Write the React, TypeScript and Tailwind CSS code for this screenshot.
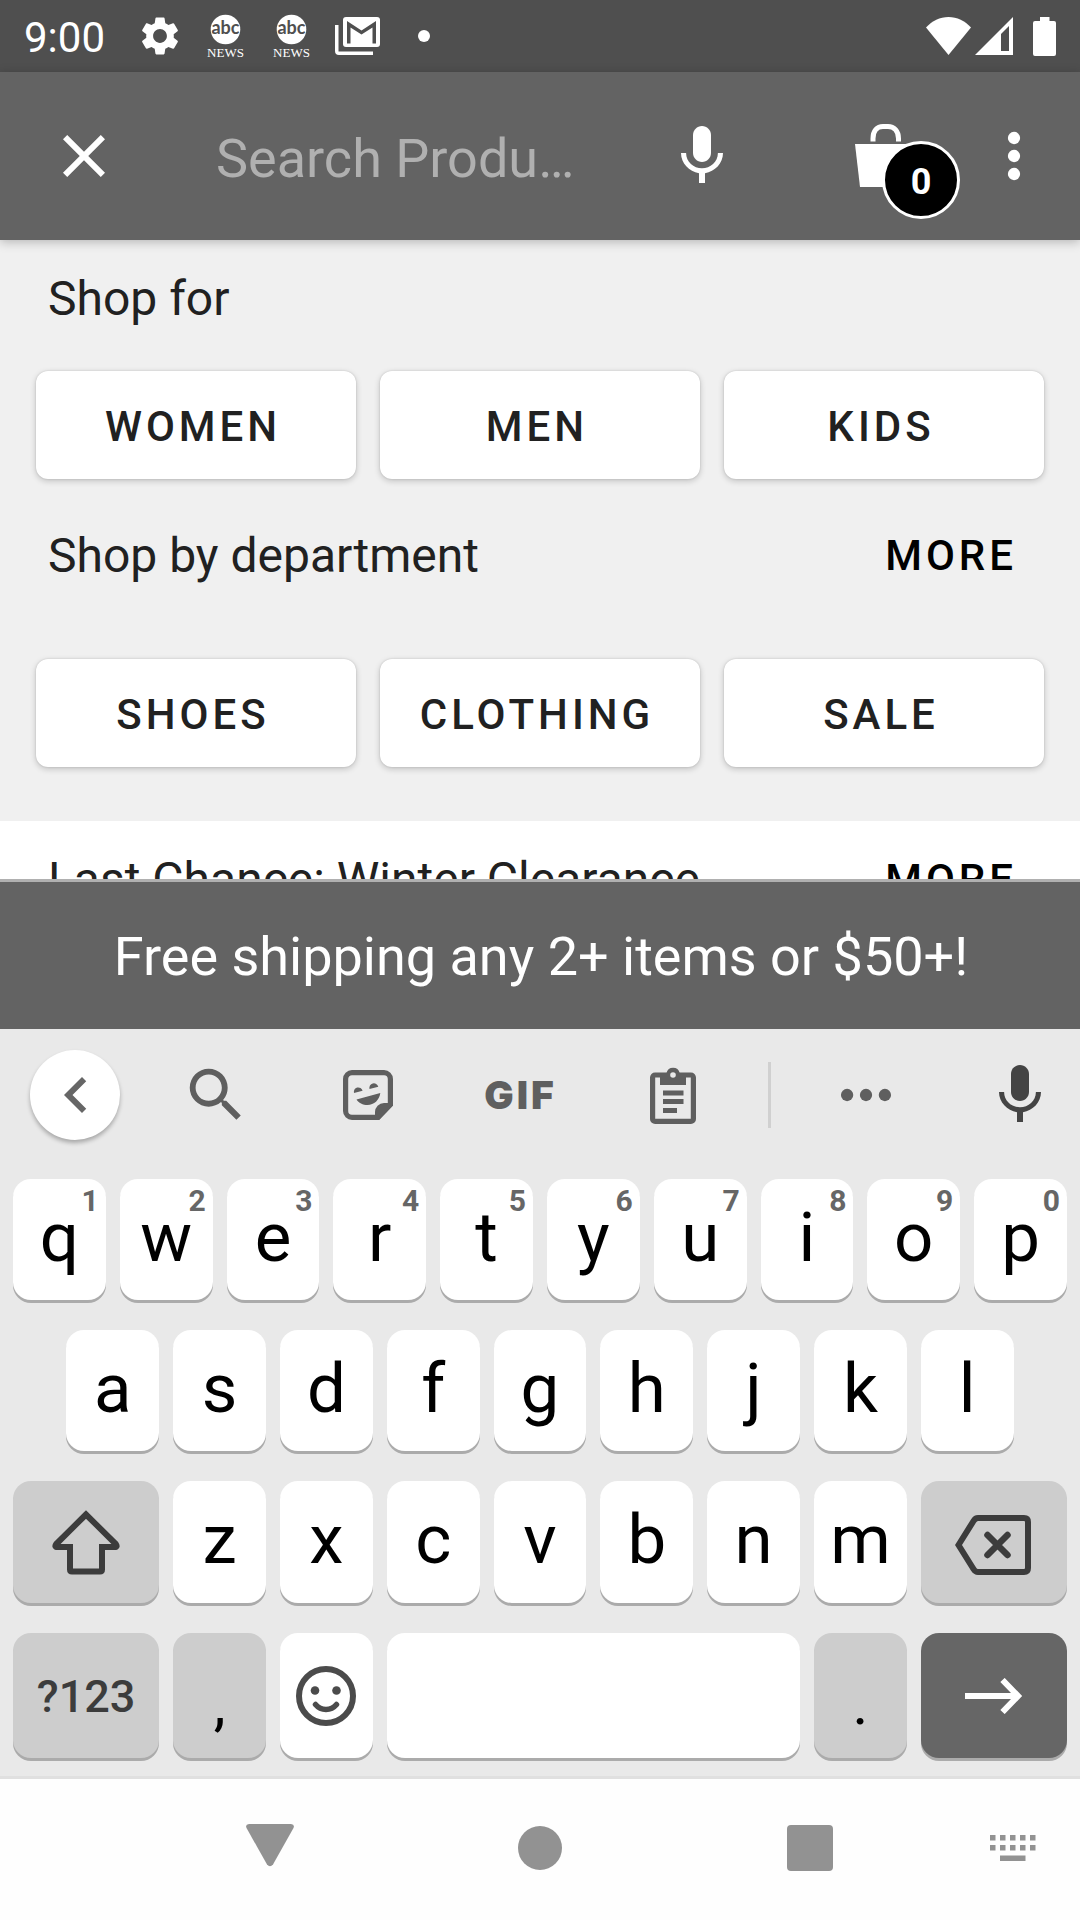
import React from "react";

/* ---------- Icons ---------- */

const GearIcon = () => (
  <svg className="size-[46px]" viewBox="0 0 24 24" fill="currentColor" aria-hidden="true">
    <path d="M19.14 12.94c.04-.3.06-.61.06-.94 0-.32-.02-.64-.07-.94l2.03-1.58a.49.49 0 0 0 .12-.61l-1.92-3.32a.488.488 0 0 0-.59-.22l-2.39.96c-.5-.38-1.03-.7-1.62-.94l-.36-2.54a.484.484 0 0 0-.48-.41h-3.84c-.24 0-.43.17-.47.41l-.36 2.54c-.59.24-1.13.57-1.62.94l-2.39-.96c-.22-.08-.47 0-.59.22L2.74 8.87c-.12.21-.08.47.12.61l2.03 1.58c-.05.3-.09.63-.09.94s.02.64.07.94l-2.03 1.58a.49.49 0 0 0-.12.61l1.92 3.32c.12.22.37.29.59.22l2.39-.96c.5.38 1.03.7 1.62.94l.36 2.54c.05.24.24.41.48.41h3.84c.24 0 .44-.17.47-.41l.36-2.54c.59-.24 1.13-.56 1.62-.94l2.39.96c.22.08.47 0 .59-.22l1.92-3.32c.12-.22.07-.47-.12-.61l-2.01-1.58zM12 15.6c-1.98 0-3.6-1.62-3.6-3.6s1.62-3.6 3.6-3.6 3.6 1.62 3.6 3.6-1.62 3.6-3.6 3.6z" />
  </svg>
);

const AbcNewsIcon = () => (
  <svg className="h-[54px] w-[40px]" viewBox="-1 -5 40 54" role="img" aria-label="abc NEWS">
    <circle cx="18.500" cy="15.500" r="14.800" fill="#fff" />
    <text x="18.500" y="20" textAnchor="middle" fontFamily="Lato, sans-serif" fontWeight="700" fontSize="18" fill="#4f4f4f">abc</text>
    <text x="18.500" y="43" textAnchor="middle" fontFamily="'Liberation Serif', serif" fontSize="13" fill="#fff">NEWS</text>
  </svg>
);

const GmailIcon = () => (
  <svg className="h-[38px] w-[45px]" viewBox="0 0 45 38" aria-hidden="true">
    <path d="M0 8h3.500v26.500H38V38H4a4 4 0 0 1-4-4z" fill="#fff" />
    <rect x="8" width="37" height="30" rx="3" fill="#fff" />
    <path d="M12 4l14.500 9.500L41 4v22.500h-3.500V10.500L26.500 17.500l-11-7v16H12z" fill="#4f4f4f" />
  </svg>
);

const WifiIcon = () => (
  <svg className="h-[38px] w-[45px]" viewBox="0 0 45 38" fill="currentColor" aria-hidden="true">
    <path d="M22.500 38L0 10.500C6 4 14 0 22.500 0S39 4 45 10.500z" />
  </svg>
);

const CellIcon = () => (
  <svg className="size-[38px]" viewBox="0 0 38 38" fill="currentColor" fillRule="evenodd" aria-hidden="true">
    <path d="M38 0v38H0zM34 9l-8 8v17h8z" />
  </svg>
);

const BatteryIcon = () => (
  <svg className="h-[39px] w-[23px]" viewBox="0 0 23 39" fill="currentColor" aria-hidden="true">
    <path d="M7 0h9.500v4H21a2 2 0 0 1 2 2v31a2 2 0 0 1-2 2H2a2 2 0 0 1-2-2V6a2 2 0 0 1 2-2h5z" />
  </svg>
);

const CloseIcon = () => (
  <svg className="size-[72px]" viewBox="0 0 24 24" fill="currentColor" aria-hidden="true">
    <path d="M19 6.410L17.590 5 12 10.590 6.410 5 5 6.410 10.590 12 5 17.590 6.410 19 12 13.410 17.590 19 19 17.590 13.410 12z" />
  </svg>
);

const MicIcon = () => (
  <svg className="size-[72px]" viewBox="0 0 24 24" fill="currentColor" aria-hidden="true">
    <path d="M12 14c1.660 0 3-1.340 3-3V5c0-1.660-1.340-3-3-3S9 3.340 9 5v6c0 1.660 1.340 3 3 3z" />
    <path d="M17.300 11c0 3-2.540 5.100-5.300 5.100S6.700 14 6.700 11H5c0 3.410 2.720 6.230 6 6.720V21h2v-3.280c3.280-.48 6-3.300 6-6.720h-1.700z" />
  </svg>
);

const BagIcon = () => (
  <svg className="h-[64px] w-[62px]" viewBox="0 0 62 64" aria-hidden="true">
    <path d="M0 21h62l-5 43H5z" fill="#fff" />
    <path d="M18 18.500v-3C18 8 22 3.500 28 3.500h5C39 3.500 43.500 8 43.500 15.500v3" fill="none" stroke="#fff" strokeWidth="5" />
  </svg>
);

const DotsIcon = ({ vertical }: { vertical?: boolean }) => (
  <svg className="size-[72px]" viewBox="0 0 24 24" fill="currentColor" aria-hidden="true">
    <circle cx={vertical ? 12 : 5.7} cy={vertical ? 6 : 12} r="2.050" />
    <circle cx="12" cy="12" r="2.050" />
    <circle cx={vertical ? 12 : 18.3} cy={vertical ? 18 : 12} r="2.050" />
  </svg>
);

const ChevronLeftIcon = () => (
  <svg className="size-[72px]" viewBox="0 0 24 24" fill="currentColor" aria-hidden="true">
    <path d="M15.410 7.410L14 6l-6 6 6 6 1.410-1.410L10.830 12z" />
  </svg>
);

const SearchIcon = () => (
  <svg className="size-[70px]" viewBox="0 0 24 24" fill="currentColor" aria-hidden="true">
    <path d="M15.500 14h-.79l-.28-.27A6.471 6.471 0 0 0 16 9.500 6.500 6.500 0 1 0 9.500 16c1.610 0 3.090-.59 4.230-1.570l.27.28v.79l5 4.990L20.490 19l-4.990-5zm-6 0C7.010 14 5 11.990 5 9.500S7.010 5 9.500 5 14 7.010 14 9.500 11.990 14 9.500 14z" />
  </svg>
);

const StickerIcon = () => (
  <svg className="size-[50px]" viewBox="0 0 50 50" aria-hidden="true">
    <path d="M9 2.600h32a6.400 6.400 0 0 1 6.400 6.400v25.500L35 47.400H9A6.400 6.400 0 0 1 2.600 41V9A6.400 6.400 0 0 1 9 2.600z" fill="none" stroke="currentColor" strokeWidth="5.200" />
    <path d="M50 33H41a9 9 0 0 0-9 9v8h4l14-14.500z" fill="currentColor" />
    <path d="M11 23a4.400 4.400 0 0 1 8.600-2.300zM26.500 19a4.400 4.400 0 0 1 8.800-2.300zM13.500 29.500L37.300 23C36.500 30 31 35 24.500 35c-4.500 0-9-2-11-5.500z" fill="currentColor" />
  </svg>
);

const ClipboardIcon = () => (
  <svg className="h-[57px] w-[46px]" viewBox="0 0 46 57" aria-hidden="true">
    <rect x="2.600" y="8" width="40.800" height="46.400" rx="2.500" fill="none" stroke="currentColor" strokeWidth="5.200" />
    <path d="M10 6h6.500a6.800 6.800 0 0 1 13.200 0H36v12H10z" fill="currentColor" />
    <circle cx="23" cy="8" r="2.800" fill="#e9e9e9" />
    <path d="M13 23.500h20.500v5H13zM13 32h20.500v5H13zM13 41h14v5H13z" fill="currentColor" />
  </svg>
);

const ShiftIcon = () => (
  <svg className="h-[65px] w-[68px]" viewBox="0 0 68 65" fill="none" stroke="currentColor" strokeWidth="6" aria-hidden="true">
    <path d="M34 4.500L4.200 34Q2 37 5.500 37H18v22.500q0 2 2 2h28q2 0 2-2V37h12.500q3.500 0 1.300-3z" />
  </svg>
);

const BackspaceIcon = () => (
  <svg className="h-[60px] w-[76px]" viewBox="0 0 76 60" fill="none" stroke="currentColor" strokeWidth="6" aria-hidden="true">
    <path d="M3.500 30L18.500 6q1.800-3 4.500-3h46q4 0 4 4v46q0 4-4 4H23q-2.700 0-4.500-3z" />
    <path d="M32.500 20l20 20M52.500 20l-20 20" strokeLinecap="round" strokeWidth="6.500" />
  </svg>
);

const SmileIcon = () => (
  <svg className="size-[60px]" viewBox="0 0 60 60" aria-hidden="true">
    <circle cx="30" cy="30" r="27" fill="none" stroke="currentColor" strokeWidth="6" />
    <circle cx="19" cy="24.500" r="4.300" fill="currentColor" />
    <circle cx="40.500" cy="24.500" r="4.300" fill="currentColor" />
    <path d="M19.500 38.500C25 45 35 45 40.500 38.500" fill="none" stroke="currentColor" strokeWidth="5.500" strokeLinecap="round" />
  </svg>
);

const ArrowRightIcon = () => (
  <svg className="h-[36px] w-[58px]" viewBox="0 0 58 36" fill="none" stroke="currentColor" strokeWidth="6" aria-hidden="true">
    <path d="M0 18h52M37.500 2L53 18 37.500 34" />
  </svg>
);

/* ---------- Page sections ---------- */

const StatusBar = () => (
  <div className="flex h-[72px] shrink-0 items-center bg-[#4f4f4f] px-6 text-white">
    <time className="pt-1 text-[42px] leading-[48px]">9:00</time>
    <div className="ml-8 flex items-center">
      <GearIcon />
      <div className="mx-[23px] flex items-center gap-[26px]">
        <AbcNewsIcon />
        <AbcNewsIcon />
      </div>
      <div className="flex items-center gap-[38px]">
        <GmailIcon />
        <span className="size-3 rounded-full bg-white" />
      </div>
    </div>
    <div className="ml-auto flex items-center">
      <WifiIcon />
      <span className="ml-1 flex">
        <CellIcon />
      </span>
      <span className="ml-5 flex">
        <BatteryIcon />
      </span>
    </div>
  </div>
);

const AppBar = () => (
  <header className="relative z-10 flex h-[168px] shrink-0 items-center bg-[#636363] pr-3 text-white shadow-[0_2px_10px_rgba(0,0,0,0.25)]">
    <button type="button" aria-label="Close" className="flex h-full w-[168px] shrink-0 items-center justify-center">
      <CloseIcon />
    </button>
    <input
      type="text"
      aria-label="Search products"
      placeholder="Search Produ…"
      className="ml-12 h-[72px] min-w-0 flex-1 bg-transparent pt-1 text-[54px] leading-[64px] text-white outline-none placeholder:text-[#b0b0b0]"
    />
    <button type="button" aria-label="Voice search" className="flex h-full w-[144px] shrink-0 items-center justify-center">
      <MicIcon />
    </button>
    <button type="button" aria-label="Shopping bag, 0 items" className="relative mt-[51px] ml-[81px] h-[96px] w-[105px] shrink-0 self-start">
      <span className="flex h-full items-start">
        <BagIcon />
      </span>
      <span className="absolute right-0 bottom-0 flex size-[78px] items-center justify-center rounded-full border-[3px] border-white bg-black pt-1 text-[36px] leading-[42px] font-bold">
        0
      </span>
    </button>
    <button type="button" aria-label="More options" className="flex h-full w-[108px] shrink-0 items-center justify-center">
      <DotsIcon vertical />
    </button>
  </header>
);

const SectionHeader = ({ title, more }: { title: string; more?: boolean }) => (
  <div className="flex h-[56px] items-center justify-between pr-[63px] pl-12">
    <h2 className="text-[48px] leading-[56px] whitespace-nowrap text-[#212121]">{title}</h2>
    {more && (
      <button type="button" className="text-[42px] leading-[50px] font-medium tracking-[4px] text-black">
        MORE
      </button>
    )}
  </div>
);

const ButtonRow = ({ labels }: { labels: string[] }) => (
  <div className="grid grid-cols-3 gap-6 px-9">
    {labels.map((label) => (
      <button
        key={label}
        type="button"
        className="h-[108px] rounded-xl bg-white pt-1 pr-1.5 text-[42px] leading-[50px] font-medium tracking-[4px] text-[#212121] shadow-[0_2px_6px_rgba(0,0,0,0.2),0_0_2px_rgba(0,0,0,0.15)]"
      >
        {label}
      </button>
    ))}
  </div>
);

/* ---------- Keyboard ---------- */

const keyBase =
  "relative mx-[7px] flex items-center justify-center rounded-[18px] shadow-[0_3px_0_#ababab]";

const LetterKey = ({ letter, hint, className = "" }: { letter: string; hint?: string; className?: string }) => (
  <button type="button" className={`${keyBase} col-span-2 bg-white pb-1 text-[69px] leading-[80px] text-black ${className}`}>
    {letter}
    {hint && (
      <span className="absolute top-[7px] right-[7px] text-[30px] leading-[30px] font-bold text-[#666666]">{hint}</span>
    )}
  </button>
);

const toolButton = "flex h-full flex-1 items-center justify-center";

const Keyboard = () => (
  <section aria-label="Keyboard" className="shrink-0 border-b-[3px] border-[#e0e0e0] bg-[#e9e9e9]">
    <div className="flex h-[132px] items-center text-[#5f5f5f]">
      <div className="w-[140px] shrink-0 pl-[30px]">
        <button type="button" aria-label="Back" className="flex size-[90px] items-center justify-center rounded-full bg-white pl-0.5 text-[#666666] shadow-[0_3px_4px_rgba(0,0,0,0.28)]">
          <ChevronLeftIcon />
        </button>
      </div>
      <button type="button" aria-label="Search" className={toolButton}>
        <SearchIcon />
      </button>
      <button type="button" aria-label="Stickers" className={toolButton}>
        <StickerIcon />
      </button>
      <button type="button" className={`${toolButton} font-[Inter,sans-serif] text-[39px] leading-[48px] font-black tracking-[3px]`}>
        GIF
      </button>
      <button type="button" aria-label="Clipboard" className={toolButton}>
        <ClipboardIcon />
      </button>
      <span className="ml-[19px] h-[66px] w-[3px] bg-[#d0d0d0]" />
      <button type="button" aria-label="More tools" className="flex h-full w-[189px] items-center justify-center">
        <DotsIcon />
      </button>
      <button type="button" aria-label="Voice typing" className="flex h-full w-[120px] items-center justify-center text-[#444444]">
        <MicIcon />
      </button>
    </div>

    <div className="grid grid-cols-20 grid-rows-[121px_121px_122px_125px] gap-y-[30px] px-1.5 py-[18px]">
      {"qwertyuiop".split("").map((c, i) => (
        <LetterKey key={c} letter={c} hint={String((i + 1) % 10)} />
      ))}
      {"asdfghjkl".split("").map((c) => (
        <LetterKey key={c} letter={c} className={c === "a" ? "col-start-2" : ""} />
      ))}
      <button type="button" aria-label="Shift" className={`${keyBase} col-span-3 col-start-1 bg-[#cdcdcd] text-[#3c3c3c]`}>
        <ShiftIcon />
      </button>
      {"zxcvbnm".split("").map((c) => (
        <LetterKey key={c} letter={c} />
      ))}
      <button type="button" aria-label="Backspace" className={`${keyBase} col-span-3 bg-[#cdcdcd] pt-1.5 pr-0.5 text-[#3c3c3c]`}>
        <BackspaceIcon />
      </button>
      <button type="button" className={`${keyBase} col-span-3 bg-[#cdcdcd] pt-0.5 text-[45px] leading-[54px] font-medium text-[#3c3c3c]`}>
        ?123
      </button>
      <button type="button" className={`${keyBase} col-span-2 bg-[#cdcdcd] pt-4 text-[60px] leading-[70px] text-black`}>
        ,
      </button>
      <button type="button" aria-label="Emoji" className={`${keyBase} col-span-2 bg-white text-[#4b4b4b]`}>
        <SmileIcon />
      </button>
      <button type="button" aria-label="Space" className={`${keyBase} col-span-8 bg-white`} />
      <button type="button" className={`${keyBase} col-span-2 bg-[#cdcdcd] pt-4 text-[60px] leading-[70px] text-black`}>
        .
      </button>
      <button type="button" aria-label="Go" className={`${keyBase} col-span-3 bg-[#666666] text-white`}>
        <ArrowRightIcon />
      </button>
    </div>
  </section>
);

const navButton = "flex items-center justify-center";

const NavBar = () => (
  <nav aria-label="System" className="grid h-[141px] shrink-0 grid-cols-8 bg-[#fefefe] pb-1 text-[#929292]">
    <button type="button" aria-label="Hide keyboard" className={`${navButton} col-span-2 col-start-2`}>
      <svg className="size-12" viewBox="0 0 48 48" fill="currentColor" aria-hidden="true">
        <path d="M3 0h42q4 .5 2.500 4L27 40.500q-3 3.500-6 0L.5 4Q-1 .5 3 0z" />
      </svg>
    </button>
    <button type="button" aria-label="Home" className={`${navButton} col-span-2`}>
      <span className="size-11 rounded-full bg-[#929292]" />
    </button>
    <button type="button" aria-label="Recent apps" className={`${navButton} col-span-2`}>
      <span className="size-[46px] rounded-[4px] bg-[#929292]" />
    </button>
    <button type="button" aria-label="Switch keyboard" className={navButton}>
      <svg className="h-[26px] w-[46px]" viewBox="0 0 46 26" fill="currentColor" aria-hidden="true">
        {[0, 10, 20, 30, 40].map((x) => (
          <React.Fragment key={x}>
            <rect x={x} y="0" width="5.500" height="5.500" />
            <rect x={x} y="10" width="5.500" height="5.500" />
          </React.Fragment>
        ))}
        <rect x="10" y="20.500" width="25.500" height="5.500" />
      </svg>
    </button>
  </nav>
);

export default function App() {
  return (
    <div className="flex h-screen flex-col overflow-hidden bg-white font-[Roboto,sans-serif]">
      <StatusBar />
      <AppBar />
      <main className="min-h-0 flex-1 overflow-hidden">
        <div className="bg-[#f0f0f0] pt-[31px] pb-[54px]">
          <SectionHeader title="Shop for" />
          <div className="mt-11">
            <ButtonRow labels={["WOMEN", "MEN", "KIDS"]} />
          </div>
          <div className="mt-[49px]">
            <SectionHeader title="Shop by department" more />
          </div>
          <div className="mt-[75px]">
            <ButtonRow labels={["SHOES", "CLOTHING", "SALE"]} />
          </div>
        </div>
        <div className="bg-white pt-[31px]">
          <SectionHeader title="Last Chance: Winter Clearance" more />
        </div>
      </main>
      <p className="flex h-[150px] shrink-0 items-center justify-center border-t-[3px] border-[#b0b0b0] bg-[#636363] pt-0.5 pl-0.5 text-[54px] leading-[64px] text-white">
        Free shipping any 2+ items or $50+!
      </p>
      <Keyboard />
      <NavBar />
    </div>
  );
}
